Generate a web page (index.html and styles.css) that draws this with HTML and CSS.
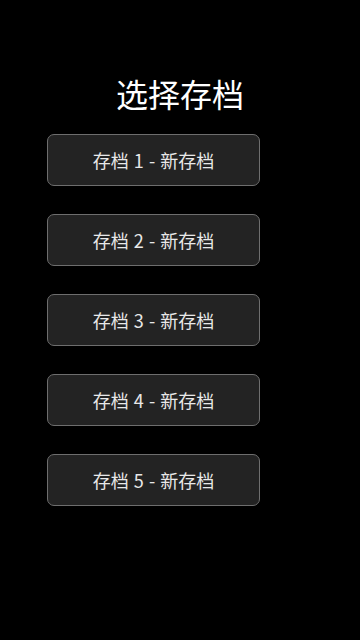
FILE: index.html
```html
<!DOCTYPE html>
<html lang="zh-CN">

<head>
  <meta charset="UTF-8">
  <title>选择存档</title>
  <link rel="stylesheet" href="styles.css">
</head>

<body>
  <div class="save-menu">
    <h1 class="title">选择存档</h1>
    <div class="slot-list">
      <button class="slot">存档 1 - 新存档</button>
      <button class="slot">存档 2 - 新存档</button>
      <button class="slot">存档 3 - 新存档</button>
      <button class="slot">存档 4 - 新存档</button>
      <button class="slot">存档 5 - 新存档</button>
    </div>
  </div>
</body>

</html>
```

FILE: styles.css
```css
html,
body {
  margin: 0;
  height: 100%;
  background: #000;
}

.save-menu {
  display: flex;
  flex-direction: column;
  align-items: center;
  padding-top: 72px;
  font-family: "Noto Sans CJK SC", "Noto Sans", sans-serif;
}

.title {
  margin: 0;
  color: #fff;
  font-size: 32px;
  font-weight: 400;
  line-height: 42px;
}

.slot-list {
  align-self: flex-start;
  display: flex;
  flex-direction: column;
  gap: 28px;
  margin-top: 20px;
  margin-left: 47px;
}

.slot {
  width: 213px;
  height: 52px;
  padding: 0;
  background: #232323;
  border: 1px solid #6e6e6e;
  border-radius: 7px;
  color: #e8e8e8;
  font-family: inherit;
  font-size: 18px;
  word-spacing: 1px;
  cursor: pointer;
}

.slot:hover {
  background: #333;
}
```
